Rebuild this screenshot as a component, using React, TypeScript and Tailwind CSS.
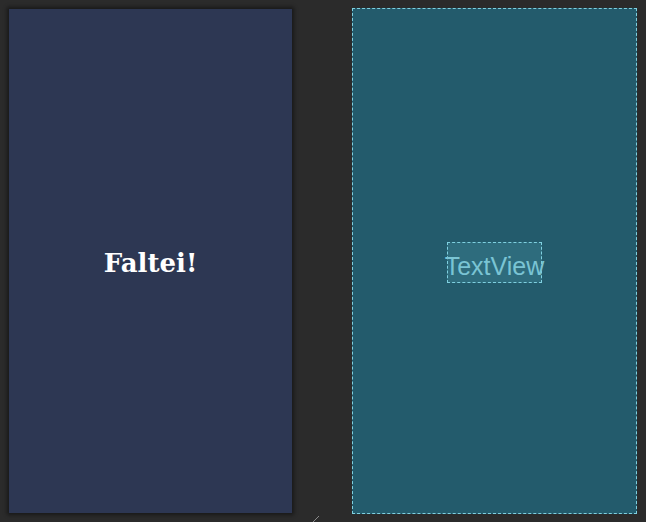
import React from "react";

export default function App() {
  return (
    <div className="relative w-[646px] h-[522px] bg-[#2b2b2b] overflow-hidden flex items-start pl-[9px] pt-[8px]">
      <div className="mt-[1px] w-[283px] h-[504px] bg-[#2d3753] shadow-[0_0_4px_2px_rgba(0,0,0,0.45)] flex items-center justify-center">
        <span className="text-white font-bold text-[26px] leading-none mt-[4px]" style={{ fontFamily: '"DejaVu Serif", "Liberation Serif", serif' }}>
          Faltei!
        </span>
      </div>
      <div className="ml-[60px] w-[285px] h-[506px] bg-[#235b6c] border border-dashed border-[#7fd0e0] flex items-center justify-center">
        <div className="w-[95px] h-[41px] mt-[3px] bg-[#2e6c7d] border border-dashed border-[#7fd0e0] flex items-center justify-center">
          <span className="text-[#7ac4d4] text-[25px] leading-none mt-[8px] whitespace-nowrap" style={{ fontFamily: '"Liberation Sans", Arial, sans-serif' }}>
            TextView
          </span>
        </div>
      </div>
      <svg className="absolute left-[311px] top-[515px]" width="10" height="7" viewBox="0 0 10 7">
        <line x1="2" y1="7" x2="8" y2="1" stroke="#8a8a8a" strokeWidth="1" />
      </svg>
    </div>
  );
}
